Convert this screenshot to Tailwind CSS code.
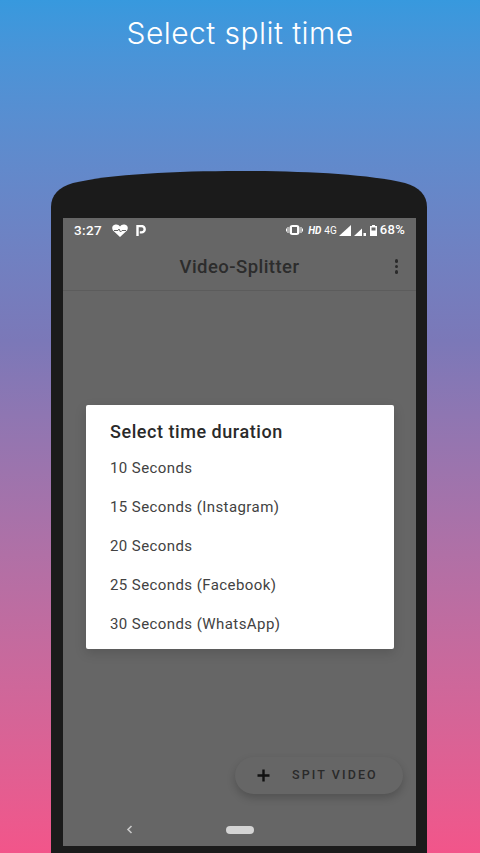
<!DOCTYPE html>
<html lang="en">
  <head>
    <meta charset="UTF-8" />
    <meta name="viewport" content="width=device-width, initial-scale=1.0" />
    <script src="https://cdn.jsdelivr.net/npm/@tailwindcss/browser@4"></script>
    <title>Video-Splitter</title>
  </head>
  <body class="font-['Roboto',sans-serif]">
    <div class="flex flex-col items-center w-[480px] h-[853px] overflow-hidden bg-gradient-to-b from-[#3799de] via-[#7b78b8] via-40% to-[#f2558a]">
      <h1 class="mt-[13px] h-[40px] text-[30px] leading-[40px] font-light tracking-[0.45px] text-white font-['Inter',sans-serif]">Select split time</h1>

      <!-- phone -->
      <div class="mt-[118px] mr-[2px] w-[376px] flex-1 flex flex-col">
        <svg class="block shrink-0" width="376" height="47" viewBox="0 0 376 47">
          <path d="M0 47V36C0 24 8 16 22 12C60 3 125 0 188 0C251 0 316 3 354 12C368 16 376 24 376 36V47Z" fill="#1b1b1b" />
        </svg>
        <div class="flex-1 bg-[#1b1b1b] px-[12px] pb-[8px]">
          <div class="relative h-[628px] w-[353px] bg-[#666666] flex flex-col">
            <!-- status bar -->
            <div class="h-[24px] flex items-center px-[11px] text-white">
              <span class="text-[13.500px] font-medium tracking-[0.4px]">3:27</span>
              <svg class="ml-[10px]" width="16" height="13" viewBox="0 0 16 13">
                <path d="M8 13L1 6.500C-.5 4.500 0 1 3.500 .5C5.500 .2 7 1 8 2.500C9 1 10.500 .2 12.500 .5C16 1 16.500 4.500 15 6.500Z" fill="#fff" />
                <path d="M2 6.500H6L7 5L8.500 8L10 6.500H14" fill="none" stroke="#666" stroke-width="1" />
              </svg>
              <svg class="ml-[8px]" width="10" height="11" viewBox="0 0 10 11">
                <path d="M1.500 11V1H5.500A3.200 3.200 0 0 1 5.500 7.400H3.800" fill="none" stroke="#fff" stroke-width="2.400" />
              </svg>
              <div class="ml-auto flex items-center">
                <svg width="17" height="10" viewBox="0 0 17 10">
                  <rect x="3.500" y="0" width="10" height="10" rx="3" fill="#fff" />
                  <rect x="6" y="2" width="5" height="6" fill="#666" />
                  <path d="M2 2V8M0.500 3.500V6.500M15 2V8M16.500 3.500V6.500" stroke="#fff" stroke-width="1" />
                </svg>
                <span class="ml-[5px] text-[10px] font-bold italic">HD</span>
                <span class="ml-[3px] text-[10px]">4G</span>
                <svg class="ml-[2px]" width="12" height="11" viewBox="0 0 12 11"><path d="M0 11L12 0V11Z" fill="#fff" /></svg>
                <svg class="ml-[3px]" width="12" height="11" viewBox="0 0 12 11"><path d="M0 11L8 3.500V11ZM9.500 8H12V11H9.500Z" fill="#fff" /></svg>
                <svg class="ml-[4px]" width="7" height="11" viewBox="0 0 7 11"><path d="M2 0H5V1H7V11H0V1H2Z" fill="#fff" /><rect x="1.500" y="2.500" width="4" height="3" fill="#666" /></svg>
                <span class="ml-[3px] text-[13px] font-medium tracking-[0.3px]">68%</span>
              </div>
            </div>

            <!-- toolbar -->
            <div class="relative h-[49px] flex items-center justify-center pt-[3px] border-b border-[#5c5c5c]">
              <span class="text-[18.500px] font-medium tracking-[0.45px] text-[#2c2c2c]">Video-Splitter</span>
              <div class="absolute right-[18px] top-[17px] flex flex-col gap-[2px]">
                <span class="block w-[3.500px] h-[3.500px] rounded-full bg-[#2a2a2a]"></span>
                <span class="block w-[3.500px] h-[3.500px] rounded-full bg-[#2a2a2a]"></span>
                <span class="block w-[3.500px] h-[3.500px] rounded-full bg-[#2a2a2a]"></span>
              </div>
            </div>

            <div class="flex-1"></div>

            <!-- nav bar -->
            <div class="relative h-[32px] shrink-0">
              <svg class="absolute left-[63px] top-[11px]" width="7" height="9" viewBox="0 0 7 9"><path d="M5.500 1L2 4.500L5.500 8" fill="none" stroke="#c8c8c8" stroke-width="1.600" /></svg>
              <span class="absolute left-[163px] top-[12px] block w-[28px] h-[8px] rounded-full bg-[#d4d4d4]"></span>
            </div>

            <!-- dialog -->
            <div class="absolute left-[23px] top-[187px] w-[308px] h-[244px] bg-white rounded-[2px] pl-[24px] shadow-[0_4px_12px_rgba(0,0,0,0.15)]">
              <p class="mt-[15px] h-[24px] text-[18px] leading-[24px] font-medium tracking-[0.55px] text-[#2a2a2a]">Select time duration</p>
              <ul class="mt-[5px] text-[15px] tracking-[0.42px] text-[#424242]">
                <li class="h-[39px] leading-[39px]">10 Seconds</li>
                <li class="h-[39px] leading-[39px]">15 Seconds (Instagram)</li>
                <li class="h-[39px] leading-[39px]">20 Seconds</li>
                <li class="h-[39px] leading-[39px]">25 Seconds (Facebook)</li>
                <li class="h-[39px] leading-[39px]">30 Seconds (WhatsApp)</li>
              </ul>
            </div>

            <!-- fab -->
            <div class="absolute left-[172px] top-[539px] w-[168px] h-[37px] rounded-full bg-[#666666] flex items-center shadow-[0_4px_8px_rgba(0,0,0,0.2)]">
              <svg class="ml-[22px]" width="13" height="13" viewBox="0 0 13 13"><path d="M6.500 0.500V12.500M0.500 6.500H12.500" stroke="#111" stroke-width="2.400" /></svg>
              <span class="ml-[22px] text-[12.500px] font-medium tracking-[2.100px] text-[#2a2a2a]">SPIT VIDEO</span>
            </div>
          </div>
        </div>
      </div>
    </div>
  </body>
</html>
